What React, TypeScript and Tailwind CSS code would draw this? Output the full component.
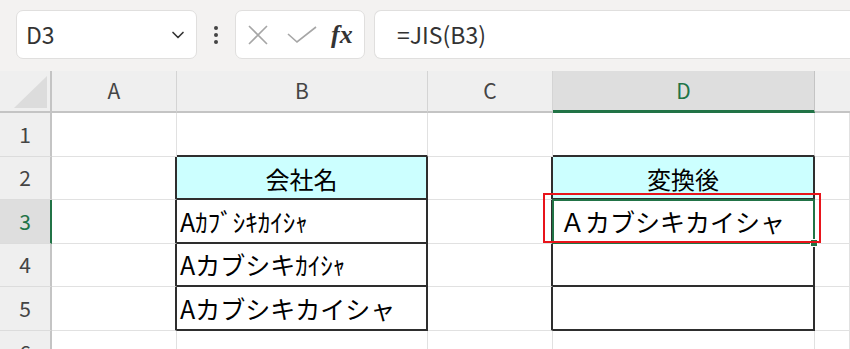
import React from 'react';
import { ChevronDown } from 'lucide-react';

const Toolbar: React.FC = () => (
  <div className="flex h-[71px] items-start bg-[#f3f2f1] pl-[16px] pt-[10px]">
    {/* Name box */}
    <div className="flex h-[49px] w-[181px] items-center justify-between rounded-[7px] border border-[#e0dfde] bg-white pl-[9px] pr-[8px]">
      <span className="text-[23px] text-[#333]">D3</span>
      <ChevronDown size={20} strokeWidth={2} className="text-[#333]" />
    </div>

    {/* Vertical ellipsis */}
    <div className="flex h-[49px] w-[38px] flex-col items-center justify-center gap-[3px]">
      <span className="h-[4px] w-[4px] rounded-full bg-[#444]" />
      <span className="h-[4px] w-[4px] rounded-full bg-[#444]" />
      <span className="h-[4px] w-[4px] rounded-full bg-[#444]" />
    </div>

    {/* Cancel / enter / insert function */}
    <div className="flex h-[49px] w-[130px] items-center rounded-[7px] border border-[#e0dfde] bg-white pl-[11px]">
      <svg width="22" height="22" viewBox="0 0 22 22" className="text-[#a6a6a6]">
        <path d="M2 2 L20 20 M20 2 L2 20" stroke="currentColor" strokeWidth="1.6" fill="none" />
      </svg>
      <svg width="30" height="18" viewBox="0 0 30 18" className="ml-[18px] text-[#a6a6a6]">
        <path d="M1 8 L10 16 L29 1" stroke="currentColor" strokeWidth="1.6" fill="none" />
      </svg>
      <span className="ml-[14px] font-['Liberation_Serif',serif] text-[26px] font-bold italic leading-none text-[#333]">
        fx
      </span>
    </div>

    {/* Formula input */}
    <div className="ml-[9px] flex h-[49px] flex-1 items-center rounded-l-[7px] border border-r-0 border-[#e0dfde] bg-white pl-[22px]">
      <span className="text-[23px] text-[#333]">=JIS(B3)</span>
    </div>
  </div>
);

const colHead = 'flex items-center justify-center border-r border-b-2 border-r-[#d4d4d4] border-b-[#c4c4c4] bg-[#efefef] text-[21px] text-[#444]';
const rowHead = 'flex items-center justify-center border-r-2 border-b border-r-[#c4c4c4] border-b-[#dcdcdc] bg-[#efefef] text-[21px] text-[#444]';
const cell = 'border-r border-b border-[#e1e1e1]';
const leftOfBox = 'border-r-2 border-b border-r-[#2e2e2e] border-b-[#e1e1e1]';
const aboveBox = 'border-r border-r-[#e1e1e1] border-b-2 border-b-[#2e2e2e]';
const boxed = 'flex items-center border-r-2 border-b-2 border-[#2e2e2e] text-[24px] text-black leading-none';

const Sheet: React.FC = () => (
  <div className="grid grid-cols-[52px_125px_251px_125px_262px_1fr] grid-rows-[42px_44px_43px_44px_43px_44px_44px]">
    {/* Column headers */}
    <div className="flex items-end justify-end border-r-2 border-b-2 border-r-[#c4c4c4] border-b-[#c4c4c4] bg-[#efefef] pb-[3px] pr-[3px]">
      <svg width="33" height="32" viewBox="0 0 33 32">
        <path d="M33 0 L33 32 L0 32 Z" fill="#dcdcdc" />
      </svg>
    </div>
    <div className={colHead}>A</div>
    <div className={colHead}>B</div>
    <div className={colHead}>C</div>
    <div className="flex items-center justify-center border-r border-b-[3px] border-r-[#c4c4c4] border-b-[#217346] bg-[#dedede] text-[21px] text-[#217346]">
      D
    </div>
    <div className="border-b-2 border-b-[#c4c4c4] bg-[#efefef]" />

    {/* Row 1 */}
    <div className={rowHead}>1</div>
    <div className={cell} />
    <div className={aboveBox} />
    <div className={cell} />
    <div className={aboveBox} />
    <div className={cell} />

    {/* Row 2 */}
    <div className={rowHead}>2</div>
    <div className={leftOfBox} />
    <div className={`${boxed} justify-center bg-[#ccffff] pt-[2px]`}>会社名</div>
    <div className={leftOfBox} />
    <div className={`${boxed} justify-center bg-[#ccffff] pt-[2px]`}>変換後</div>
    <div className={cell} />

    {/* Row 3 */}
    <div className="flex items-center justify-center border-r-2 border-b border-r-[#217346] border-b-[#dcdcdc] bg-[#dedede] text-[21px] text-[#217346]">
      3
    </div>
    <div className={leftOfBox} />
    <div className={`${boxed} pl-[3px] text-[25px]`}>Aｶﾌﾞｼｷｶｲｼｬ</div>
    <div className={leftOfBox} />
    <div className={`${boxed} relative pl-[7px] text-[25px]`}>
      Ａカブシキカイシャ
      {/* active cell outline with fill handle */}
      <div className="absolute -left-px -top-px -right-[2px] -bottom-[2px] border-2 border-[#217346]" />
      <div className="absolute -right-[5px] -bottom-[5px] h-[8px] w-[8px] border border-white bg-[#217346]" />
      {/* highlight frame */}
      <div className="absolute -left-[10px] -top-[7px] -right-[8px] -bottom-[1px] z-10 border-2 border-[#e8141b]" />
    </div>
    <div className={cell} />

    {/* Row 4 */}
    <div className={rowHead}>4</div>
    <div className={leftOfBox} />
    <div className={`${boxed} pl-[3px] text-[25px]`}>Aカブシキｶｲｼｬ</div>
    <div className={leftOfBox} />
    <div className={boxed} />
    <div className={cell} />

    {/* Row 5 */}
    <div className={rowHead}>5</div>
    <div className={leftOfBox} />
    <div className={`${boxed} pl-[3px] text-[25px]`}>Aカブシキカイシャ</div>
    <div className={leftOfBox} />
    <div className={boxed} />
    <div className={cell} />

    {/* Row 6 */}
    <div className={rowHead}>6</div>
    <div className={cell} />
    <div className={cell} />
    <div className={cell} />
    <div className={cell} />
    <div className={cell} />
  </div>
);

export default function App() {
  return (
    <div className="h-[349px] w-[850px] overflow-hidden bg-white font-['Noto_Sans_CJK_JP',sans-serif]">
      <Toolbar />
      <Sheet />
    </div>
  );
}
